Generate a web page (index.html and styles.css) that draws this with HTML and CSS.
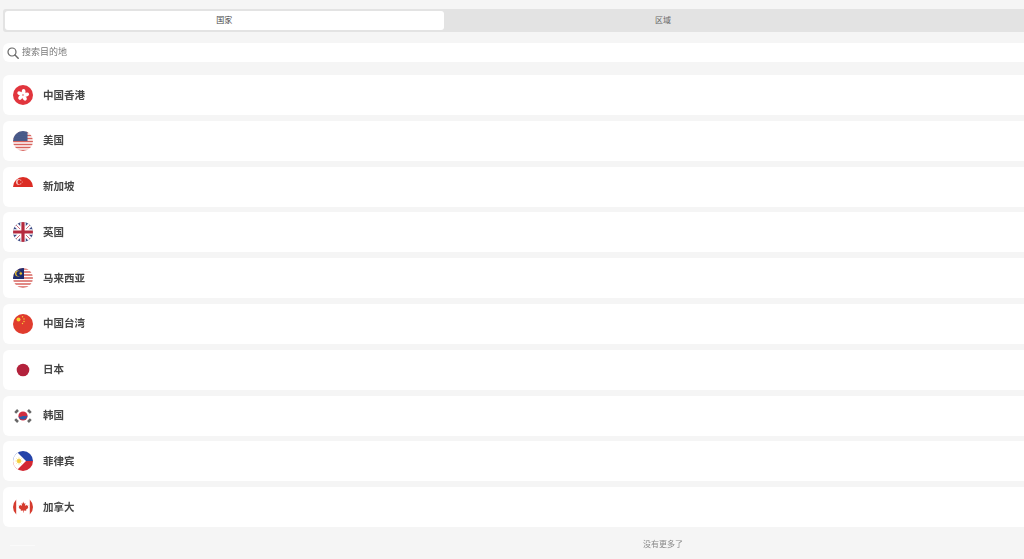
FILE: index.html
```html
<!DOCTYPE html>
<html lang="zh-CN">
<head>
    <meta charset="UTF-8">
    <meta name="viewport" content="width=device-width, initial-scale=1.0">
    <title>搜索目的地</title>
    <link rel="stylesheet" href="styles.css">
</head>
<body>
    <div class="page">
        <div class="tabs">
            <div class="tab active">国家</div>
            <div class="tab">区域</div>
            <div class="tab"></div>
        </div>

        <div class="search">
            <svg class="search-icon" viewBox="0 0 12 12" width="12" height="12">
                <circle cx="5" cy="5" r="4" fill="none" stroke="#666" stroke-width="1.2"/>
                <path d="M8 8l3.2 3.2" fill="none" stroke="#666" stroke-width="1.4" stroke-linecap="round"/>
            </svg>
            <span>搜索目的地</span>
        </div>

        <div class="list">
            <div class="row">
                <svg class="flag" viewBox="0 0 20 20">
                    <circle cx="10" cy="10" r="10" fill="#e1333b"/>
                    <g fill="#fff">
                        <ellipse cx="10.600" cy="6.800" rx="1.900" ry="2.900" transform="rotate(0 10 10)"/>
                        <ellipse cx="10.600" cy="6.800" rx="1.900" ry="2.900" transform="rotate(72 10 10)"/>
                        <ellipse cx="10.600" cy="6.800" rx="1.900" ry="2.900" transform="rotate(144 10 10)"/>
                        <ellipse cx="10.600" cy="6.800" rx="1.900" ry="2.900" transform="rotate(216 10 10)"/>
                        <ellipse cx="10.600" cy="6.800" rx="1.900" ry="2.900" transform="rotate(288 10 10)"/>
                    </g>
                    <circle cx="10" cy="10" r="1" fill="#f0a0a4"/>
                </svg>
                <span>中国香港</span>
            </div>
            <div class="row">
                <svg class="flag" viewBox="0 0 20 20">
                    <defs>
                        <clipPath id="c2"><circle cx="10" cy="10" r="10"/></clipPath>
                        <pattern id="stars" width="2" height="2" patternUnits="userSpaceOnUse">
                            <circle cx="1" cy="1" r=".4" fill="#9aa5c4"/>
                        </pattern>
                    </defs>
                    <g clip-path="url(#c2)">
                        <rect width="20" height="20" fill="#fff"/>
                        <path d="M0 1.500h20M0 4.500h20M0 7.500h20M0 10.500h20M0 13.500h20M0 16.500h20M0 19.500h20" stroke="#d8625c" stroke-width="1.600"/>
                        <rect width="14.500" height="10" fill="#3c4f80"/>
                        <rect width="14.500" height="10" fill="url(#stars)"/>
                    </g>
                </svg>
                <span>美国</span>
            </div>
            <div class="row">
                <svg class="flag" viewBox="0 0 20 20">
                    <defs><clipPath id="c3"><circle cx="10" cy="10" r="10"/></clipPath></defs>
                    <g clip-path="url(#c3)">
                        <rect width="20" height="10" fill="#db2a22"/>
                        <circle cx="6" cy="5" r="3" fill="#f4c4c0"/>
                        <circle cx="7.200" cy="5" r="2.600" fill="#db2a22"/>
                        <circle cx="7.800" cy="3.600" r=".5" fill="#f4c4c0"/>
                        <circle cx="9.200" cy="5" r=".5" fill="#f4c4c0"/>
                        <circle cx="7.800" cy="6.400" r=".5" fill="#f4c4c0"/>
                    </g>
                </svg>
                <span>新加坡</span>
            </div>
            <div class="row">
                <svg class="flag" viewBox="0 0 20 20">
                    <defs><clipPath id="c4"><circle cx="10" cy="10" r="10"/></clipPath></defs>
                    <g clip-path="url(#c4)">
                        <rect width="20" height="20" fill="#3d4b85"/>
                        <path d="M0 0l20 20M20 0L0 20" stroke="#fff" stroke-width="4.500"/>
                        <path d="M0 0l20 20M20 0L0 20" stroke="#d0707e" stroke-width="1"/>
                        <path d="M10 0v20M0 10h20" stroke="#fff" stroke-width="5.500"/>
                        <path d="M10 0v20M0 10h20" stroke="#b5283c" stroke-width="3.200"/>
                    </g>
                </svg>
                <span>英国</span>
            </div>
            <div class="row">
                <svg class="flag" viewBox="0 0 20 20">
                    <defs><clipPath id="c5"><circle cx="10" cy="10" r="10"/></clipPath></defs>
                    <g clip-path="url(#c5)">
                        <rect width="20" height="20" fill="#fff"/>
                        <path d="M0 1h20M0 4h20M0 7h20M0 10h20M0 13h20M0 16h20M0 19h20" stroke="#d8625c" stroke-width="1.700"/>
                        <rect width="11" height="11" fill="#1c2a6e"/>
                        <circle cx="5" cy="5.500" r="3" fill="#e8bf2a"/>
                        <circle cx="6" cy="5.500" r="2.600" fill="#1c2a6e"/>
                        <circle cx="7.800" cy="5.500" r="1.300" fill="#e8bf2a"/>
                    </g>
                </svg>
                <span>马来西亚</span>
            </div>
            <div class="row">
                <svg class="flag" viewBox="0 0 20 20">
                    <circle cx="10" cy="10" r="10" fill="#e03a2c"/>
                    <circle cx="5.500" cy="5.500" r="2" fill="#f6d335"/>
                    <circle cx="9.500" cy="2.800" r=".7" fill="#f6d335"/>
                    <circle cx="11" cy="5" r=".7" fill="#f6d335"/>
                    <circle cx="11" cy="7.500" r=".7" fill="#f6d335"/>
                    <circle cx="9.500" cy="9.500" r=".7" fill="#f6d335"/>
                </svg>
                <span>中国台湾</span>
            </div>
            <div class="row">
                <svg class="flag" viewBox="0 0 20 20">
                    <circle cx="10" cy="10" r="6.300" fill="#b3203a"/>
                </svg>
                <span>日本</span>
            </div>
            <div class="row">
                <svg class="flag" viewBox="0 0 20 20">
                    <circle cx="10" cy="10" r="4.600" fill="#cf2b3f"/>
                    <path d="M5.500 10.200a4.600 4.600 0 0 0 9 -.9c-1.300 1.500-3 .5-4.500 .8-1.800 .4-3 1.600-4.500 .1z" fill="#2a5aa8"/>
                    <path d="M2.200 6.800l2.800-2.800M15 4l2.800 2.800M2.200 13.200l2.800 2.800M15 16l2.800-2.800" stroke="#666" stroke-width="2.600"/>
                </svg>
                <span>韩国</span>
            </div>
            <div class="row">
                <svg class="flag" viewBox="0 0 20 20">
                    <defs><clipPath id="c9"><circle cx="10" cy="10" r="10"/></clipPath></defs>
                    <g clip-path="url(#c9)">
                        <rect width="20" height="10" fill="#2241a8"/>
                        <rect y="10" width="20" height="10" fill="#d32630"/>
                        <path d="M0 0h3l10 10-10 10H0z" fill="#fff"/>
                        <circle cx="6" cy="10" r="2" fill="#f5cf3a"/>
                        <path d="M6 6.500v7M2.500 10h7M3.500 7.500l5 5M8.500 7.500l-5 5" stroke="#f5cf3a" stroke-width=".6"/>
                    </g>
                </svg>
                <span>菲律宾</span>
            </div>
            <div class="row">
                <svg class="flag" viewBox="0 0 20 20">
                    <defs><clipPath id="c10"><circle cx="10" cy="10" r="10"/></clipPath></defs>
                    <g clip-path="url(#c10)">
                        <rect width="3.200" height="20" fill="#d5392c"/>
                        <rect x="16.800" width="3.200" height="20" fill="#d5392c"/>
                        <path d="M10 4.500l1.200 2.200 1.200-.6-.5 2.800 1.500-1.200.5 1.100 1.400-.2-.5 1.700.6.400-2.400 2 .3 1-2.500-.3v2.100h-.6v-2.100l-2.500 .3.3-1-2.400-2 .6-.4-.5-1.700 1.400 .2 .5-1.100 1.500 1.200-.5-2.800 1.200 .6z" fill="#d5392c"/>
                    </g>
                </svg>
                <span>加拿大</span>
            </div>
        </div>

        <div class="no-more">没有更多了</div>
    </div>
</body>
</html>
```

FILE: styles.css
```css
html, body {
    margin: 0;
    height: 559px;
    overflow: hidden;
}
body {
    font-family: "Noto Sans CJK SC", "Noto Sans", sans-serif;
    background-color: #f5f5f5;
    color: #333;
}
.page {
    width: 1320px;
    padding: 9px 3px 0;
    opacity: 0.99;
}
.tabs {
    display: grid;
    grid-template-columns: repeat(3, 1fr);
    height: 19px;
    padding: 2px;
    background-color: #e3e3e3;
    border-radius: 3px;
}
.tab {
    font-size: 8px;
    line-height: 18px;
    text-align: center;
    color: #666;
}
.tab.active {
    background-color: #fff;
    border-radius: 3px;
    color: #444;
}
.search {
    display: flex;
    align-items: center;
    gap: 3px;
    height: 19px;
    margin-top: 11px;
    padding-left: 4px;
    background-color: #fff;
    border-radius: 6px;
    font-size: 9px;
    color: #777;
}
.search span {
    margin-bottom: 2px;
}
.search-icon {
    flex: none;
}
.list {
    display: flex;
    flex-direction: column;
    gap: 5.800px;
    margin-top: 13px;
}
.row {
    display: flex;
    align-items: center;
    gap: 10px;
    height: 40px;
    padding-left: 10px;
    background-color: #fff;
    border-radius: 6px;
    font-size: 10.500px;
    font-weight: 700;
    color: #444;
}
.row span {
    margin-bottom: 2px;
}
.flag {
    flex: none;
    width: 20px;
    height: 20px;
}
.no-more {
    position: relative;
    margin-top: 11px;
    font-size: 8px;
    line-height: 12px;
    text-align: center;
    color: #888;
}
/* faint mark in the bottom left corner */
.no-more::before {
    content: "";
    position: absolute;
    left: 7px;
    top: 7px;
    width: 25px;
    height: 1px;
    background-color: #fafafa;
}
```
